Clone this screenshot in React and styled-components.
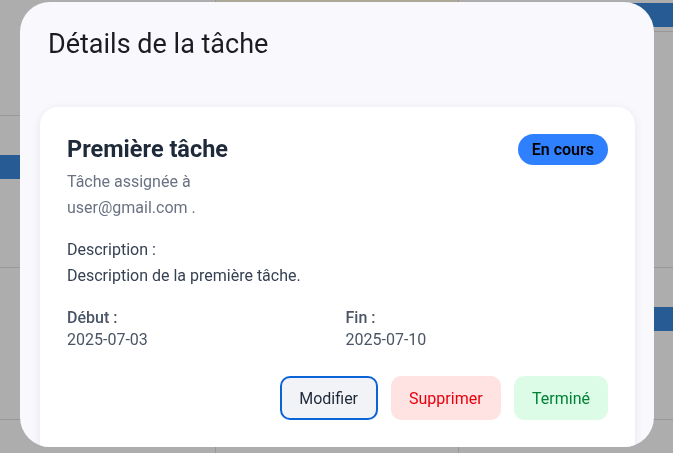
import React from 'react'
import styled, { createGlobalStyle } from 'styled-components'

const GlobalStyle = createGlobalStyle`
  html, body {
    margin: 0;
    padding: 0;
    height: 100%;
    overflow: hidden;
    font-family: Roboto, "Liberation Sans", Arial, sans-serif;
  }
`

// calendrier en arriere plan (sous le voile gris)
const columns = [
  { cells: [{ h: 116 }, { h: 152, event: 39 }, { h: 152 }, { h: 80 }] },
  { cells: [{ h: 116, today: true }, { h: 152 }, { h: 152 }, { h: 80 }] },
  { cells: [{ h: 32, event: 3 }, { h: 236 }, { h: 152, event: 39 }, { h: 80 }] },
]

const Calendar = styled.div`
  display: grid;
  grid-template-columns: 215px 243px 1fr;
  height: 100vh;
  background: #fff;
`

const Column = styled.div`
  display: flex;
  flex-direction: column;
  border-left: 1px solid #e0e0e0;
  &:first-child {
    border-left: none;
  }
`

const Cell = styled.div`
  flex: none;
  height: ${(p) => p.$h}px;
  box-sizing: border-box;
  border-bottom: 1px solid #e0e0e0;
  background: ${(p) => (p.$today ? '#fff9e0' : '#fff')};
  padding-top: ${(p) => p.$event || 0}px;
`

const EventBar = styled.div`
  height: 24px;
  background: #3986da;
`

const Overlay = styled.div`
  position: fixed;
  inset: 0;
  background: rgba(0, 0, 0, 0.32);
`

const Modal = styled.div`
  position: fixed;
  left: 20px;
  top: 2px;
  width: 634px;
  height: 445px;
  box-sizing: border-box;
  background: #f8f8fd;
  border-radius: 30px;
  padding: 26px 19px 0 20px;
  overflow: hidden;
  display: flex;
  flex-direction: column;
`

const ModalTitle = styled.h2`
  margin: 0 0 47px 8px;
  font-size: 27px;
  line-height: 32px;
  font-weight: 400;
  color: #1c1b22;
`

const Card = styled.div`
  flex: none;
  background: #fff;
  border-radius: 18px;
  box-shadow: 0 2px 10px rgba(30, 30, 80, 0.08);
  padding: 27px 27px 40px;
  box-sizing: border-box;
`

const Header = styled.div`
  display: flex;
  align-items: center;
  justify-content: space-between;
`

const TaskTitle = styled.h3`
  margin: 0;
  font-size: 23.5px;
  line-height: 31px;
  font-weight: 700;
  color: #1e2939;
`

const Badge = styled.span`
  height: 31px;
  display: inline-flex;
  align-items: center;
  padding: 0 14px;
  border-radius: 999px;
  background: #2f80ff;
  color: #000;
  font-size: 16px;
  font-weight: 600;
`

const Assigned = styled.p`
  margin: 4px 0 0;
  font-size: 16px;
  line-height: 26px;
  color: #6a7282;
`

const Description = styled.div`
  margin-top: 16px;
  font-size: 16px;
  line-height: 25.6px;
  color: #364153;
`

const Dates = styled.div`
  margin-top: 19px;
  display: grid;
  grid-template-columns: 1fr 1fr;
  column-gap: 16px;
  color: #4a5565;
  font-size: 16px;
  line-height: 22px;
`

const DateLabel = styled.div`
  font-weight: 500;
`

const Actions = styled.div`
  margin-top: 25px;
  display: flex;
  justify-content: flex-end;
  gap: 13px;
`

const tones = {
  edit: { bg: '#f1f3f6', fg: '#1e2939', border: '#0b63d8', pad: 17.5 },
  delete: { bg: '#ffe2e2', fg: '#e7000b', border: 'transparent', pad: 16.5 },
  done: { bg: '#dcfce7', fg: '#008236', border: 'transparent', pad: 16 },
}

const Button = styled.button`
  height: 44px;
  padding: 0 ${(p) => tones[p.$tone].pad}px;
  border-radius: 10px;
  border: 2px solid ${(p) => tones[p.$tone].border};
  background: ${(p) => tones[p.$tone].bg};
  color: ${(p) => tones[p.$tone].fg};
  font-family: inherit;
  font-size: 16px;
  cursor: pointer;
`

export default function App() {
  return (
    <>
      <GlobalStyle />
      <Calendar>
        {columns.map((col, i) => (
          <Column key={i}>
            {col.cells.map((c, j) => (
              <Cell key={j} $h={c.h} $today={c.today} $event={c.event}>
                {c.event !== undefined && <EventBar />}
              </Cell>
            ))}
          </Column>
        ))}
      </Calendar>
      <Overlay />
      <Modal>
        <ModalTitle>Détails de la tâche</ModalTitle>
        <Card>
          <Header>
            <TaskTitle>Première tâche</TaskTitle>
            <Badge>En cours</Badge>
          </Header>
          <Assigned>
            Tâche assignée à
            <br />
            user@gmail.com .
          </Assigned>
          <Description>
            <div>Description :</div>
            <div>Description de la première tâche.</div>
          </Description>
          <Dates>
            <div>
              <DateLabel>Début :</DateLabel>
              <div>2025-07-03</div>
            </div>
            <div>
              <DateLabel>Fin :</DateLabel>
              <div>2025-07-10</div>
            </div>
          </Dates>
          <Actions>
            <Button $tone="edit">Modifier</Button>
            <Button $tone="delete">Supprimer</Button>
            <Button $tone="done">Terminé</Button>
          </Actions>
        </Card>
      </Modal>
    </>
  )
}
